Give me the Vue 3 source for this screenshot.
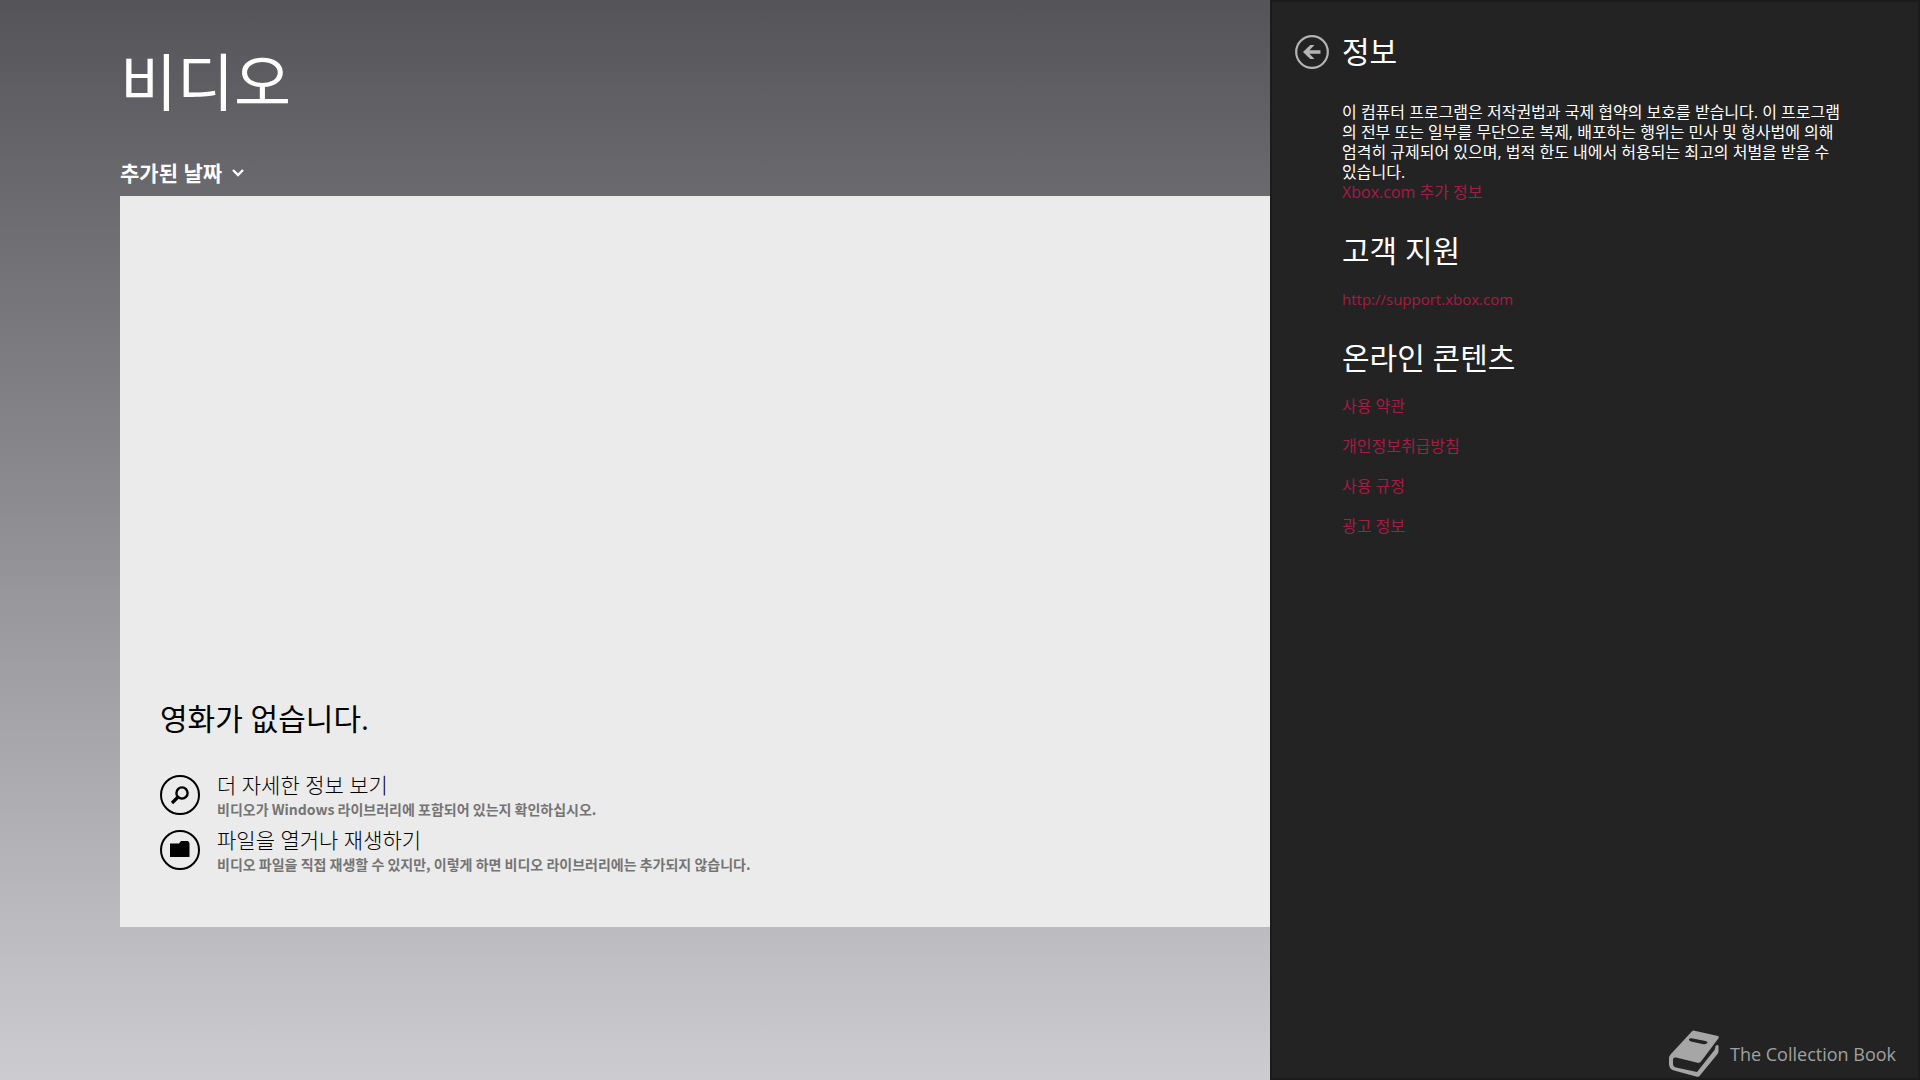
<script setup>
import { ref } from 'vue';

const sort = ref('added');

const actions = [
  {
    id: 'more',
    title: '더 자세한 정보 보기',
    text: '비디오가 Windows 라이브러리에 포함되어 있는지 확인하십시오.',
  },
  {
    id: 'open',
    title: '파일을 열거나 재생하기',
    text: '비디오 파일을 직접 재생할 수 있지만, 이렇게 하면 비디오 라이브러리에는 추가되지 않습니다.',
  },
];

const contentLinks = ['사용 약관', '개인정보취급방침', '사용 규정', '광고 정보'];
</script>

<template>
  <div class="app">
    <main class="library">
      <h1>비디오</h1>

      <label class="sort">
        <select v-model="sort" aria-label="추가된 날짜">
          <option value="added">추가된 날짜</option>
        </select>
        <svg width="12" height="8" viewBox="0 0 12 8">
          <path d="M1 1l5 5 5-5" fill="none" stroke="#fff" stroke-width="2.4" />
        </svg>
      </label>

      <section class="empty">
        <h2>영화가 없습니다.</h2>
        <button v-for="a in actions" :key="a.id" class="action">
          <svg class="action-icon" width="40" height="40" viewBox="0 0 40 40">
            <circle cx="20" cy="20" r="19" fill="none" stroke="#000" stroke-width="2" />
            <g v-if="a.id === 'more'" fill="none" stroke="#000">
              <circle cx="22" cy="18" r="5.6" stroke-width="2.4" />
              <path d="M18 22l-6 6" stroke-width="3.2" />
            </g>
            <path v-else d="M10 13.5h9l2-2.500h7l1.500 2V27H10z" />
          </svg>
          <span class="action-body">
            <span class="action-title">{{ a.title }}</span>
            <span class="action-text">{{ a.text }}</span>
          </span>
        </button>
      </section>
    </main>

    <aside class="panel">
      <header class="panel-head">
        <button class="back" aria-label="뒤로">
          <svg width="34" height="34" viewBox="0 0 34 34">
            <circle cx="17" cy="17" r="15.8" fill="none" stroke="#b4b4b4" stroke-width="2.2" />
            <path d="M8 17l7.200-7h4.300l-5 5.200h11v3.600h-11l5 5.200h-4.300z" fill="#b4b4b4" />
          </svg>
        </button>
        <h2>정보</h2>
      </header>

      <div class="panel-body">
        <p>
          이 컴퓨터 프로그램은 저작권법과 국제 협약의 보호를 받습니다. 이 프로그램의 전부 또는 일부를 무단으로 복제, 배포하는 행위는 민사 및 형사법에 의해 엄격히 규제되어 있으며, 법적 한도 내에서 허용되는 최고의 처벌을 받을 수 있습니다.
        </p>
        <a href="#">Xbox.com 추가 정보</a>

        <h2>고객 지원</h2>
        <a href="#" class="url">http://support.xbox.com</a>

        <h2>온라인 콘텐츠</h2>
        <ul>
          <li v-for="link in contentLinks" :key="link">
            <a href="#">{{ link }}</a>
          </li>
        </ul>
      </div>

      <footer class="brand">
        <svg width="52" height="48" viewBox="0 0 52 48">
          <path
            fill="#a6a6a6"
            fill-rule="evenodd"
            d="M24 1.2Q25 .4 26.5.7L50 6Q51.600 6.600 50.500 8.300L33 31.500Q31.500 33.200 29.500 32.800L8 27.500Q5 27 5 29.500V34Q5 36.500 8 37.500L29 42L46.500 20Q47.500 18 47.500 16Q49.500 14.500 50.500 15.500V21Q50.500 22.500 49.500 24L31.500 46Q30.500 47 29 46.700L6 40.500Q1 39 1 34V28.500Q1 26.500 2.500 24.500ZM23.500 8.200Q20.500 8 21 10Q21.300 11 23 11.400L35.500 14.200Q38.500 14.600 39.500 12.800Q39.800 11.500 37.500 11Z"
          />
        </svg>
        <span>The Collection Book</span>
      </footer>
    </aside>
  </div>
</template>

<style>
body {
  margin: 0;
}
</style>

<style scoped>
.app {
  display: flex;
  min-height: 100vh;
  font-family: 'Open Sans', 'Noto Sans CJK KR', sans-serif;
  background: linear-gradient(#555459, #cdccd1);
}

h1,
h2,
p,
ul {
  margin: 0;
  padding: 0;
  font-weight: 400;
}

button,
select {
  padding: 0;
  border: none;
  background: transparent;
  font-family: inherit;
  color: inherit;
  cursor: pointer;
}

h2 {
  font-size: 30px;
  line-height: 40px;
}

/* LIBRARY */
.library {
  flex: 1;
  display: flex;
  flex-direction: column;
  padding: 40px 0 153px 120px;
}

h1 {
  font-size: 62px;
  line-height: 84px;
  color: #fff;
}

.sort {
  display: flex;
  align-items: center;
  align-self: flex-start;
  gap: 9px;
  margin: 33px 0 7px;
  color: #fff;
}

.sort select {
  appearance: none;
  height: 32px;
  font-size: 21px;
  font-weight: 700;
}

.empty {
  flex: 1;
  display: flex;
  flex-direction: column;
  justify-content: flex-end;
  padding: 40px;
  padding-bottom: 50px;
  background: #ebebeb;
  color: #000;
}

.empty h2 {
  margin-bottom: 28px;
}

.action {
  display: flex;
  align-items: center;
  gap: 17px;
  height: 55px;
  text-align: left;
}

.action-icon {
  flex-shrink: 0;
}

.action-body {
  display: flex;
  flex-direction: column;
}

.action-title {
  font-size: 21px;
  font-weight: 300;
  line-height: 28px;
}

.action-text {
  font-family: 'Noto Sans CJK KR', sans-serif;
  font-size: 14px;
  font-weight: 700;
  line-height: 20px;
  color: #747474;
}

/* PANEL */
.panel {
  display: flex;
  flex-direction: column;
  box-sizing: border-box;
  width: 650px;
  border: 2px solid #1b1b1b;
  background: #232323;
  color: #fff;
}

.panel-head {
  display: flex;
  align-items: center;
  gap: 13px;
  padding: 30px 0 0 23px;
}

.back,
.back svg {
  display: block;
}

.panel-body {
  flex: 1;
  padding: 30px 76px 0 70px;
  font-size: 16px;
  line-height: 20px;
}

.panel-body h2 {
  margin: 29px 0 18px;
}

a {
  display: block;
  color: #a61c43;
  text-decoration: none;
}

.url {
  font-size: 15px;
}

ul {
  list-style: none;
}

li {
  margin-bottom: 20px;
}

.brand {
  display: flex;
  align-items: center;
  justify-content: flex-end;
  gap: 10px;
  padding-right: 22px;
  font-size: 18px;
  color: #a0a0a0;
}
</style>
